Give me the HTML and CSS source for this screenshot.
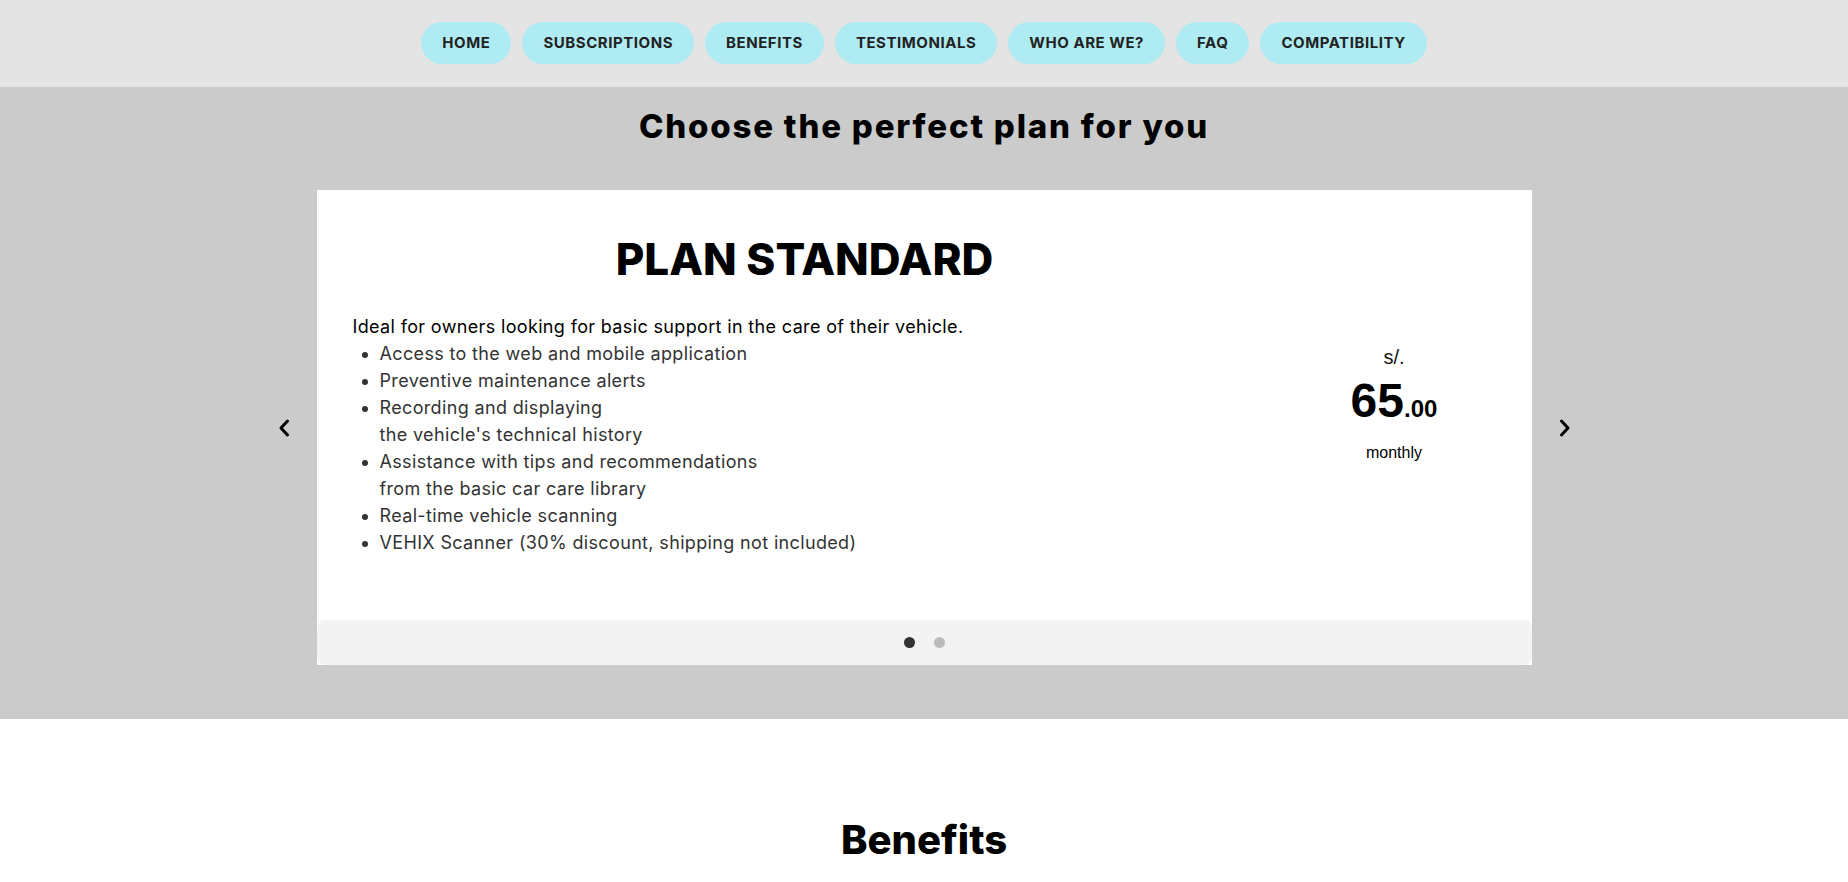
FILE: index.html
```html
<!DOCTYPE html>
<html lang="en">
<head>
<meta charset="utf-8">
<title>Plans</title>
<link rel="stylesheet" href="styles.css">
</head>
<body>
<header class="topbar">
  <nav class="nav">
    <a class="pill" href="#">HOME</a>
    <a class="pill" href="#">SUBSCRIPTIONS</a>
    <a class="pill" href="#">BENEFITS</a>
    <a class="pill" href="#">TESTIMONIALS</a>
    <a class="pill" href="#">WHO ARE WE?</a>
    <a class="pill" href="#">FAQ</a>
    <a class="pill" href="#">COMPATIBILITY</a>
  </nav>
</header>

<section class="plans">
  <h2 class="plans-title">Choose the perfect plan for you</h2>
  <div class="carousel">
    <button class="arrow" aria-label="Previous">
      <svg viewBox="0 0 14 20" width="14" height="20"><polyline points="10.5,3 4,10 10.5,17" fill="none" stroke="#000" stroke-width="3" stroke-linecap="round" stroke-linejoin="round"/></svg>
    </button>
    <div class="card">
      <div class="card-body">
        <div class="plan-info">
          <h3 class="plan-name">PLAN STANDARD</h3>
          <p class="plan-desc">Ideal for owners looking for basic support in the care of their vehicle.</p>
          <ul class="plan-list">
            <li>Access to the web and mobile application</li>
            <li>Preventive maintenance alerts</li>
            <li>Recording and displaying<br>the vehicle's technical history</li>
            <li>Assistance with tips and recommendations<br>from the basic car care library</li>
            <li>Real-time vehicle scanning</li>
            <li>VEHIX Scanner (30% discount, shipping not included)</li>
          </ul>
        </div>
        <div class="plan-price">
          <div class="currency">s/.</div>
          <div class="amount">65<span class="cents">.00</span></div>
          <div class="period">monthly</div>
        </div>
      </div>
      <div class="card-dots">
        <span class="dot active"></span>
        <span class="dot"></span>
      </div>
    </div>
    <button class="arrow" aria-label="Next">
      <svg viewBox="0 0 14 20" width="14" height="20"><polyline points="3.5,3 10,10 3.5,17" fill="none" stroke="#000" stroke-width="3" stroke-linecap="round" stroke-linejoin="round"/></svg>
    </button>
  </div>
</section>

<section class="benefits">
  <h2 class="benefits-title">Benefits</h2>
</section>
</body>
</html>
```
FILE: styles.css
```css
* { box-sizing: border-box; }

body {
  margin: 0;
  font-family: Inter, "Open Sans", sans-serif;
  color: #000;
  background: #fff;
}

.topbar {
  background: #e4e4e4;
  padding: 22px 0 23px;
}

.nav {
  display: flex;
  justify-content: center;
  gap: 11px;
}

.pill {
  display: block;
  background: #aeebf2;
  color: #222;
  text-decoration: none;
  font-weight: 700;
  font-size: 15px;
  line-height: 22px;
  padding: 10px 21px;
  border-radius: 21px;
  letter-spacing: 0.55px;
}

.plans {
  background: #cbcbcb;
  padding: 19px 0 54px;
}

.plans-title {
  margin: 0 0 44px;
  text-align: center;
  font-size: 33px;
  line-height: 40px;
  font-weight: 800;
  letter-spacing: 1.8px;
}

.carousel {
  display: flex;
  justify-content: center;
  align-items: center;
  gap: 13px;
}

.arrow {
  width: 40px;
  height: 40px;
  border: 0;
  background: transparent;
  padding: 0;
  display: flex;
  align-items: center;
  justify-content: center;
}

.card {
  width: 1215px;
  background: #fff;
}

.card-body {
  display: grid;
  grid-template-columns: 940px 1fr;
  padding: 42px 0 0;
  height: 430px;
}

.plan-info {
  padding-left: 36px;
}

.plan-name {
  margin: 0 0 27px;
  text-align: center;
  font-size: 44px;
  line-height: 54px;
  font-weight: 800;
}

.plan-desc {
  margin: 0;
  font-size: 18px;
  line-height: 27px;
  letter-spacing: 0.35px;
}

.plan-list {
  margin: 0;
  padding-left: 27px;
  font-size: 18px;
  line-height: 27px;
  letter-spacing: 0.35px;
  color: #333;
}

.plan-price {
  padding-top: 113px;
  text-align: center;
  font-family: "Liberation Sans", Arial, sans-serif;
}

.currency {
  font-size: 20px;
  line-height: 24px;
  color: #111;
}

.amount {
  margin-top: 6px;
  font-size: 48px;
  line-height: 52px;
  font-weight: 700;
}

.cents {
  font-size: 24px;
}

.period {
  margin-top: 8px;
  font-size: 16px;
  line-height: 20px;
}

.card-dots {
  height: 45px;
  background: #f3f3f3;
  border-radius: 8px;
  display: flex;
  justify-content: center;
  align-items: center;
  gap: 19px;
}

.dot {
  width: 11px;
  height: 11px;
  border-radius: 50%;
  background: #bbb;
}

.dot.active {
  background: #333;
}

.benefits {
  padding: 97px 0 40px;
}

.benefits-title {
  margin: 0;
  text-align: center;
  font-size: 40px;
  line-height: 48px;
  font-weight: 800;
}
```
